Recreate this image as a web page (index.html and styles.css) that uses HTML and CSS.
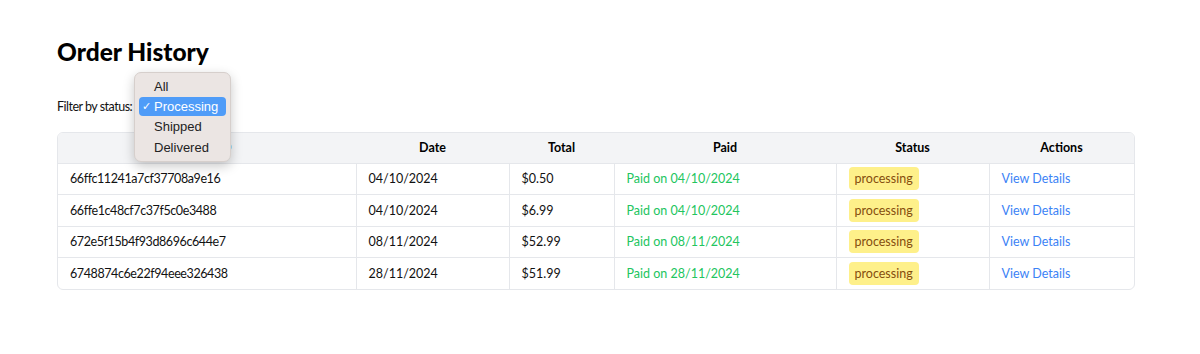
FILE: index.html
```html
<!DOCTYPE html>
<html>
<head>
<meta charset="utf-8">
<link rel="stylesheet" href="styles.css">
</head>
<body>
<div class="page">
  <h1 class="title">Order History</h1>
  <div class="filter">
    <span class="filter-label">Filter by status:</span>
    <div class="popup">
      <div class="opt">All</div>
      <div class="opt selected"><span class="check">✓</span>Processing</div>
      <div class="opt">Shipped</div>
      <div class="opt">Delivered</div>
    </div>
  </div>
  <div class="table-wrap">
    <table class="orders">
      <thead>
        <tr>
          <th class="c-id">Order ID</th>
          <th class="c-date">Date</th>
          <th class="c-total">Total</th>
          <th class="c-paid">Paid</th>
          <th class="c-status">Status</th>
          <th class="c-actions">Actions</th>
        </tr>
      </thead>
      <tbody>
        <tr>
          <td class="id">66ffc11241a7cf37708a9e16</td>
          <td>04/10/2024</td>
          <td>$0.50</td>
          <td class="paid">Paid on 04/10/2024</td>
          <td><span class="badge">processing</span></td>
          <td><a class="link" href="#">View Details</a></td>
        </tr>
        <tr>
          <td class="id">66ffe1c48cf7c37f5c0e3488</td>
          <td>04/10/2024</td>
          <td>$6.99</td>
          <td class="paid">Paid on 04/10/2024</td>
          <td><span class="badge">processing</span></td>
          <td><a class="link" href="#">View Details</a></td>
        </tr>
        <tr>
          <td class="id">672e5f15b4f93d8696c644e7</td>
          <td>08/11/2024</td>
          <td>$52.99</td>
          <td class="paid">Paid on 08/11/2024</td>
          <td><span class="badge">processing</span></td>
          <td><a class="link" href="#">View Details</a></td>
        </tr>
        <tr>
          <td class="id">6748874c6e22f94eee326438</td>
          <td>28/11/2024</td>
          <td>$51.99</td>
          <td class="paid">Paid on 28/11/2024</td>
          <td><span class="badge">processing</span></td>
          <td><a class="link" href="#">View Details</a></td>
        </tr>
      </tbody>
    </table>
  </div>
</div>
</body>
</html>
```
FILE: styles.css
```css
* { box-sizing: border-box; }
html, body { margin: 0; background: #fff; }
body {
  font-family: "Lato", "Open Sans", sans-serif;
  color: #111;
}
.page {
  width: 1078px;
  margin-left: 57px;
  padding-top: 35px;
}
.title {
  margin: 0;
  font-family: "Lato", sans-serif;
  font-weight: 900;
  font-size: 24.5px;
  line-height: 34px;
  color: #000;
}
.filter {
  display: flex;
  align-items: center;
  margin-top: 27px;
  height: 20px;
  position: relative;
}
.filter-label {
  font-size: 12.5px;
  color: #111;
  letter-spacing: -0.5px;
}
.popup {
  position: absolute;
  left: 77px;
  top: -24px;
  width: 97px;
  height: 90px;
  background: #ebe5e3;
  border: 1px solid #d6cfcc;
  border-radius: 7px;
  box-shadow: 0 4px 12px rgba(0,0,0,0.22);
  padding: 3px 4px;
  font-family: "Liberation Sans", "DejaVu Sans", sans-serif;
  font-size: 13px;
  color: #222;
  z-index: 5;
}
.opt {
  height: 20.3px;
  display: flex;
  align-items: center;
  padding-left: 15px;
  position: relative;
}
.opt.selected {
  color: #fff;
  z-index: 0;
}
.opt.selected::before {
  content: "";
  position: absolute;
  left: 0;
  right: 0;
  top: 1px;
  bottom: 1px;
  background: #4f9cf8;
  border-radius: 4px;
  z-index: -1;
}
.check {
  position: absolute;
  left: 3px;
  font-size: 11px;
}
.table-wrap {
  margin-top: 16px;
  border: 1px solid #e5e7eb;
  border-radius: 6px;
  overflow: hidden;
}
.orders {
  width: 100%;
  border-collapse: collapse;
  font-size: 12.5px;
}
.orders th {
  background: #f3f4f6;
  font-weight: 700;
  text-align: center;
  height: 30px;
  color: #000;
  padding: 0 12px;
}
.orders td {
  height: 31.5px;
  padding: 0 12px;
  border-top: 1px solid #e5e7eb;
  border-left: 1px solid #e5e7eb;
  color: #111;
}
.orders td:first-child { border-left: none; }
.orders td.id { letter-spacing: -0.4px; }
.c-id { width: 298px; }
.c-date { width: 153px; }
.c-total { width: 105px; }
.c-paid { width: 222px; }
.c-status { width: 153px; }
.orders td.paid { color: #22c55e; }
.badge {
  display: inline-block;
  background: #fef08a;
  color: #854d0e;
  border-radius: 4px;
  padding: 3px 6px;
  line-height: 17px;
}
.link {
  color: #3b82f6;
  text-decoration: none;
}
```
